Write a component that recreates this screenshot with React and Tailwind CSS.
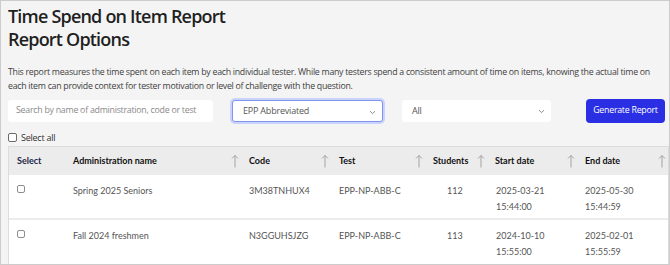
import React from "react";

const columns = [
  { label: "Select", arrow: false },
  { label: "Administration name", arrow: true },
  { label: "Code", arrow: true },
  { label: "Test", arrow: true },
  { label: "Students", arrow: true },
  { label: "Start date", arrow: true },
  { label: "End date", arrow: true },
];

const rows = [
  {
    name: "Spring 2025 Seniors",
    code: "3M38TNHUX4",
    test: "EPP-NP-ABB-C",
    students: 112,
    start: ["2025-03-21", "15:44:00"],
    end: ["2025-05-30", "15:44:59"],
  },
  {
    name: "Fall 2024 freshmen",
    code: "N3GGUHSJZG",
    test: "EPP-NP-ABB-C",
    students: 113,
    start: ["2024-10-10", "15:55:00"],
    end: ["2025-02-01", "15:55:59"],
  },
];

const grid = "grid grid-cols-[56px_176px_90px_94px_62px_90px_1fr]";

function SortArrow() {
  return (
    <svg width="8" height="14" viewBox="0 0 8 14" fill="none" stroke="#a3a3a3" strokeWidth="1">
      <path d="M4 1.5V13.5M1 4.5L4 1.5L7 4.5" />
    </svg>
  );
}

function Chevron() {
  return (
    <svg width="7" height="5" viewBox="0 0 7 5" fill="none" stroke="#8a8a8a" strokeWidth="1">
      <path d="M1 1.2L3.5 3.6L6 1.2" />
    </svg>
  );
}

function SelectBox({ value, focused, width }) {
  return (
    <div
      className={`relative flex h-[22px] items-center rounded-[3px] bg-white pl-[10px] text-[9px] tracking-[-0.2px] text-[#555] ${width} ${
        focused ? "border border-[#7f95ee] ring-2 ring-[#c9d3fb]" : ""
      }`}
    >
      {value}
      <span className="absolute right-[6px] top-[9px]">
        <Chevron />
      </span>
    </div>
  );
}

function RowCheckbox() {
  return <span className="mt-[10px] ml-[8px] block h-[8px] w-[8px] rounded-[2px] border border-[#8d8d8d] bg-white" />;
}

export default function App() {
  return (
    <div
      className="h-[265px] w-[670px] overflow-hidden border border-[#cccccc] bg-[#f4f4f4] pl-[7px] text-[#1f1f1f]"
      style={{ fontFamily: "'Open Sans', 'Noto Sans', sans-serif" }}
    >
      <h1 className="pt-[4px] text-[18px] font-semibold leading-[22px] tracking-[-0.8px]">Time Spend on Item Report</h1>
      <h2 className="mt-[1px] text-[18px] font-semibold leading-[22px] tracking-[-0.8px]">Report Options</h2>

      <p className="mt-[15px] pr-[8px] text-[8.8px] leading-[14px] tracking-[-0.28px] text-[#3f3f3f]">
        This report measures the time spent on each item by each individual tester. While many testers spend a consistent
        amount of time on items, knowing the actual time on each item can provide context for tester motivation or level of
        challenge with the question.
      </p>

      <div className="mt-[6px] flex items-center pr-[4px]">
        <div className="flex h-[22px] w-[205px] items-center whitespace-nowrap rounded-[3px] bg-white pl-[8px] text-[8.8px] tracking-[-0.25px] text-[#8a8a8a]">
          Search by name of administration, code or test
        </div>
        <div className="ml-[19px]">
          <SelectBox value="EPP Abbreviated" focused width="w-[151px]" />
        </div>
        <div className="ml-[19px]">
          <SelectBox value="All" width="w-[149px]" />
        </div>
        <button className="ml-auto h-[24px] w-[79px] whitespace-nowrap rounded-[4px] bg-[#2a2fe3] text-[8.8px] tracking-[-0.25px] text-white">
          Generate Report
        </button>
      </div>

      <label className="mt-[8px] flex items-center gap-[4px] text-[9px] tracking-[-0.25px] text-[#333]">
        <span className="block h-[9px] w-[9px] rounded-[2px] border border-[#6b6b6b] bg-white" />
        Select all
      </label>

      <div
        className="mt-[1px] border border-[#dcdcdc] bg-white text-[9px]"
        style={{ fontFamily: "Lato, 'Liberation Sans', sans-serif" }}
      >
        <div className={`${grid} h-[28px] bg-[#ececec] font-bold`}>
          {columns.map((c, i) => (
            <div key={c.label} className="flex items-center justify-between pl-[8px] pr-[2px]">
              <span className={i === 0 ? "text-[#1c2747]" : "text-[#111]"}>{c.label}</span>
              {c.arrow && <SortArrow />}
            </div>
          ))}
        </div>
        {rows.map((r, i) => (
          <div
            key={r.code}
            className={`${grid} h-[45px] leading-[16px] text-[#555] ${i === 0 ? "border-b-2 border-[#ececec]" : ""}`}
          >
            <div>
              <RowCheckbox />
            </div>
            <div className="pl-[8px] pt-[8px]">{r.name}</div>
            <div className="pl-[8px] pt-[8px]">{r.code}</div>
            <div className="pl-[8px] pt-[8px]">{r.test}</div>
            <div className="pl-[22px] pt-[8px]">{r.students}</div>
            <div className="pl-[9px] pt-[8px]">
              {r.start[0]}
              <br />
              {r.start[1]}
            </div>
            <div className="pl-[8px] pt-[8px]">
              {r.end[0]}
              <br />
              {r.end[1]}
            </div>
          </div>
        ))}
      </div>
    </div>
  );
}
